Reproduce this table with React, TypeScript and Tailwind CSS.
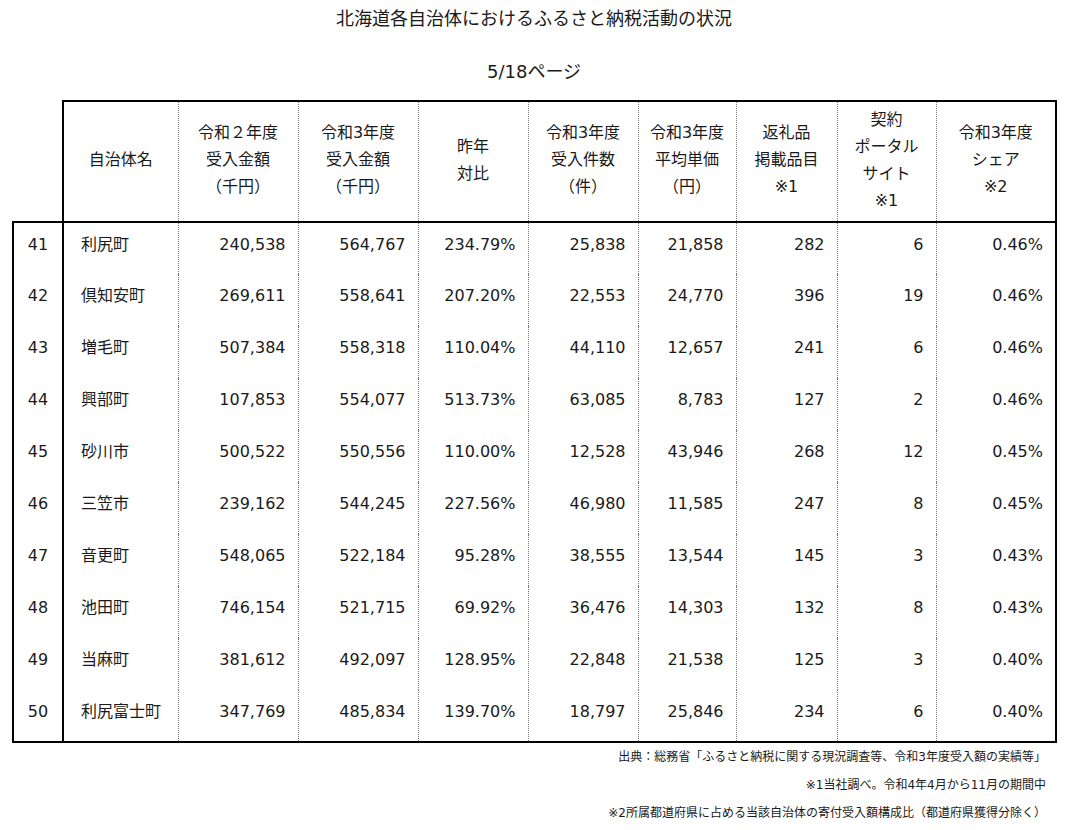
import React from 'react';

type Row = {
  no: number;
  name: string;
  r2: string;
  r3: string;
  ratio: string;
  count: string;
  avg: string;
  items: string;
  portals: string;
  share: string;
};

const rows: Row[] = [
  { no: 41, name: '利尻町', r2: '240,538', r3: '564,767', ratio: '234.79%', count: '25,838', avg: '21,858', items: '282', portals: '6', share: '0.46%' },
  { no: 42, name: '倶知安町', r2: '269,611', r3: '558,641', ratio: '207.20%', count: '22,553', avg: '24,770', items: '396', portals: '19', share: '0.46%' },
  { no: 43, name: '増毛町', r2: '507,384', r3: '558,318', ratio: '110.04%', count: '44,110', avg: '12,657', items: '241', portals: '6', share: '0.46%' },
  { no: 44, name: '興部町', r2: '107,853', r3: '554,077', ratio: '513.73%', count: '63,085', avg: '8,783', items: '127', portals: '2', share: '0.46%' },
  { no: 45, name: '砂川市', r2: '500,522', r3: '550,556', ratio: '110.00%', count: '12,528', avg: '43,946', items: '268', portals: '12', share: '0.45%' },
  { no: 46, name: '三笠市', r2: '239,162', r3: '544,245', ratio: '227.56%', count: '46,980', avg: '11,585', items: '247', portals: '8', share: '0.45%' },
  { no: 47, name: '音更町', r2: '548,065', r3: '522,184', ratio: '95.28%', count: '38,555', avg: '13,544', items: '145', portals: '3', share: '0.43%' },
  { no: 48, name: '池田町', r2: '746,154', r3: '521,715', ratio: '69.92%', count: '36,476', avg: '14,303', items: '132', portals: '8', share: '0.43%' },
  { no: 49, name: '当麻町', r2: '381,612', r3: '492,097', ratio: '128.95%', count: '22,848', avg: '21,538', items: '125', portals: '3', share: '0.40%' },
  { no: 50, name: '利尻富士町', r2: '347,769', r3: '485,834', ratio: '139.70%', count: '18,797', avg: '25,846', items: '234', portals: '6', share: '0.40%' },
];

const headers: string[][] = [
  ['自治体名'],
  ['令和２年度', '受入金額', '（千円）'],
  ['令和3年度', '受入金額', '（千円）'],
  ['昨年', '対比'],
  ['令和3年度', '受入件数', '（件）'],
  ['令和3年度', '平均単価', '（円）'],
  ['返礼品', '掲載品目', '※1'],
  ['契約', 'ポータル', 'サイト', '※1'],
  ['令和3年度', 'シェア', '※2'],
];

const colWidths = [50, 115, 120, 120, 110, 110, 98, 101, 99, 120];

export default function App() {
  return (
    <div className="w-[1068px] h-[830px] bg-white text-[#1a1a1a] font-['DejaVu_Sans','Noto_Sans_CJK_JP',sans-serif] overflow-hidden">
      {/* Title */}
      <div className="pt-[5px] text-center text-[18px] leading-[27px]">北海道各自治体におけるふるさと納税活動の状況</div>
      <div className="mt-[26px] text-center text-[18px] leading-[27px]">5/18ページ</div>

      {/* Table */}
      <table className="mt-[15px] ml-[12px] w-[1043px] table-fixed border-collapse text-[16px]">
        <colgroup>
          {colWidths.map((w, i) => (
            <col key={i} style={{ width: w }} />
          ))}
        </colgroup>
        <thead>
          <tr className="h-[121px]">
            <th className="border-b-2 border-r-2 border-solid border-black p-0"></th>
            {headers.map((lines, i) => (
              <th
                key={i}
                className={
                  'border-t-2 border-b-2 border-solid border-black p-0 pb-[4px] align-middle text-center font-normal leading-[27px] ' +
                  (i === headers.length - 1 ? 'border-r-2' : 'border-r border-r-[#777] [border-right-style:dotted]')
                }
              >
                {lines.map((l, j) => (
                  <div key={j}>{l}</div>
                ))}
              </th>
            ))}
          </tr>
        </thead>
        <tbody>
          {rows.map((r, idx) => {
            const last = idx === rows.length - 1;
            const bottom = last ? ' border-b-2' : '';
            const dot =
              'border-solid border-black border-r border-r-[#777] [border-right-style:dotted]' + (last ? ' border-b-2' : '');
            const num = [r.r2, r.r3, r.ratio, r.count, r.avg, r.items, r.portals];
            return (
              <tr key={r.no} className="h-[52px]">
                <td className={'border-l-2 border-r-2 border-solid border-black p-0 pb-[8px] text-center align-middle' + bottom}>{r.no}</td>
                <td className={dot + ' p-0 pb-[8px] pl-[17px] align-middle'}>{r.name}</td>
                {num.map((v, i) => (
                  <td key={i} className={dot + ' p-0 pb-[8px] pr-[12px] text-right align-middle'}>
                    {v}
                  </td>
                ))}
                <td className={'border-r-2 border-solid border-black p-0 pb-[8px] pr-[12px] text-right align-middle' + bottom}>{r.share}</td>
              </tr>
            );
          })}
        </tbody>
      </table>

      {/* Notes */}
      <div className="mt-[6px] pr-[22px] flex flex-col items-end gap-3 text-[12px] leading-[16px]">
        <div>出典：総務省「ふるさと納税に関する現況調査等、令和3年度受入額の実績等」</div>
        <div>※1当社調べ。令和4年4月から11月の期間中</div>
        <div>※2所属都道府県に占める当該自治体の寄付受入額構成比（都道府県獲得分除く）</div>
      </div>
    </div>
  );
}
